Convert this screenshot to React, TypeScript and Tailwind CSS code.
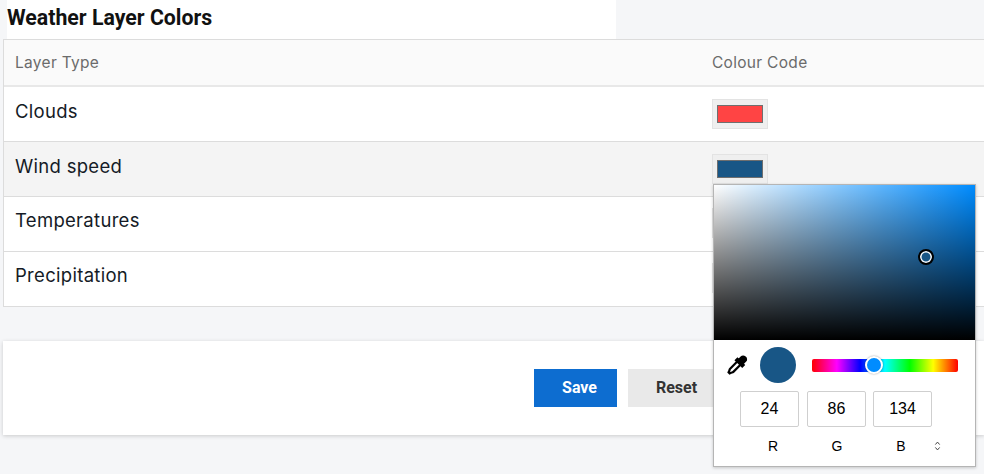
const rows = [
  { name: "Clouds", color: "bg-[#ff4444]", striped: false },
  { name: "Wind speed", color: "bg-[#185686]", striped: true },
  { name: "Temperatures", color: "bg-[#ff4444]", striped: false },
  { name: "Precipitation", color: "bg-[#ff4444]", striped: false },
];

function Eyedropper() {
  return (
    <svg viewBox="0 0 24 24" className="w-[22px] h-[22px]" fill="none" stroke="#000" strokeWidth="2.4">
      <path d="M20.5 3.5a2.6 2.6 0 0 0-3.7 0l-3 3-1.3-1.3-1.6 1.6 6.8 6.8 1.6-1.6-1.3-1.3 3-3a2.6 2.6 0 0 0-.5-4.2z" fill="#000" />
      <path d="M12 8.5 4.5 16c-.8.8-.5 1.7-1 2.6L2.8 20l1.2 1.2 1.4-.7c.9-.5 1.8-.2 2.6-1L15.5 12" />
    </svg>
  );
}

export default function App() {
  return (
    <div className="relative w-[984px] h-[474px] overflow-hidden bg-[#f5f6f8] font-['Inter',sans-serif]">
      <div className="ml-[7px] w-[609px] h-[39px] bg-white font-['Roboto',sans-serif] font-bold text-[21.3px] leading-[35px] text-[#111]">
        Weather Layer Colors
      </div>
      <div className="ml-[3px] bg-white border border-[#dcdcdc] border-r-0">
        <div className="flex h-[47px] items-center bg-[#fafafa] border-b-2 border-[#e8e8e8] text-[15.5px] tracking-[0.3px] text-[#6b6b6b]">
          <div className="w-[708px] pl-[11px]">Layer Type</div>
          <div>Colour Code</div>
        </div>
        {rows.map((r, i) => (
          <div
            key={r.name}
            className={`flex ${i < 2 ? "pt-[12px]" : "pt-[11px]"} ${i < 3 ? "h-[55px] border-b border-[#dcdcdc]" : "h-[54px]"} ${r.striped ? "bg-[#f4f4f4]" : ""}`}
          >
            <div className="w-[708px] pl-[11px] text-[18.5px] tracking-[0.3px] leading-[24px] text-[#151b26]">{r.name}</div>
            <div className="w-[56px] h-[30px] bg-[#efefef] border border-[#e3e3e3] flex items-center justify-center">
              <div className={`w-[46px] h-[18px] border border-[#6f6f6f] ${r.color}`} />
            </div>
          </div>
        ))}
      </div>
      <div className="ml-[3px] mt-[34px] h-[94px] bg-white shadow-[0_1px_4px_rgba(0,0,0,0.18)] flex items-center pl-[531px] gap-[11px] font-['Roboto',sans-serif] font-bold text-[16px]">
        <button className="w-[83px] h-[38px] bg-[#0d6dd0] text-white pl-[8px]">Save</button>
        <button className="w-[97px] h-[38px] bg-[#e9e9e9] text-[#333]">Reset</button>
      </div>

      <div className="absolute left-[713px] top-[184px] w-[263px] h-[283px] bg-white border border-[#b5b5b5] shadow-[0_1px_3px_rgba(0,0,0,0.2)] font-['Liberation_Sans',sans-serif]">
        <div className="relative h-[155px] bg-[#008cff]">
          <div className="absolute inset-0 bg-[linear-gradient(to_right,#fff,rgba(255,255,255,0))]" />
          <div className="absolute inset-0 bg-[linear-gradient(to_top,#000,rgba(0,0,0,0))]" />
          <div className="absolute left-[204px] top-[64px] w-[16px] h-[16px] rounded-full bg-[#185686] border-2 border-black shadow-[inset_0_0_0_1.5px_#fff]" />
        </div>
        <div className="flex items-center h-[50px] pl-[11.5px]">
          <Eyedropper />
          <div className="ml-[12.5px] w-[36px] h-[36px] rounded-full bg-[#185686]" />
          <div className="relative ml-[16px] w-[146px] h-[13px] rounded-[2px] bg-[linear-gradient(to_right,#f00,#f0f_17%,#00f_33%,#0ff_50%,#0f0_67%,#ff0_83%,#f00)]">
            <div className="absolute left-[53px] -top-[2.5px] w-[18px] h-[18px] rounded-full bg-[#008cff] border-2 border-white shadow-[0_0_2px_rgba(0,0,0,0.4)]" />
          </div>
        </div>
        <div className="flex mt-[1px] pl-[26px] text-[16px] text-black">
          <div className="w-[59px] h-[36px] border border-[#cfcfcf] rounded-[2px] flex items-center justify-center">24</div>
          <div className="ml-[8px] w-[59px] h-[36px] border border-[#cfcfcf] rounded-[2px] flex items-center justify-center">86</div>
          <div className="ml-[7px] w-[59px] h-[36px] border border-[#cfcfcf] rounded-[2px] flex items-center justify-center">134</div>
        </div>
        <div className="relative flex pl-[29px] gap-[4px] mt-[11px] text-[14px] leading-[16px] text-black">
          <div className="w-[60px] text-center">R</div>
          <div className="w-[60px] text-center">G</div>
          <div className="w-[60px] text-center">B</div>
          <svg viewBox="0 0 8 14" className="absolute left-[220px] top-[3px] w-[7px] h-[10px]" fill="none" stroke="#444" strokeWidth="1.4">
            <path d="M1 5 4 1.5 7 5M1 9l3 3.5L7 9" />
          </svg>
        </div>
      </div>
    </div>
  );
}
